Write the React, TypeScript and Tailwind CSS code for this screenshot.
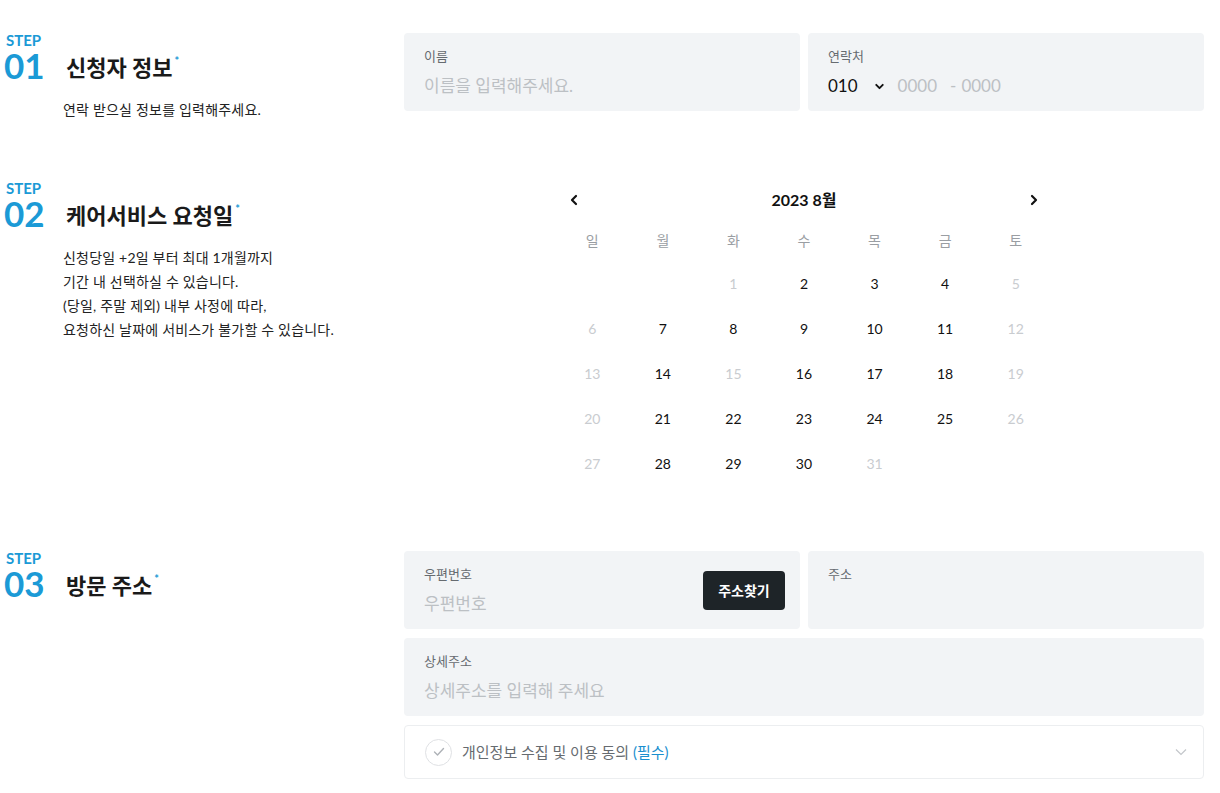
import { ChevronDown } from "lucide-react";

const BLUE = "text-[#1b9ad6]";

type Day = { n: number; off?: boolean } | null;

const weekdays = ["일", "월", "화", "수", "목", "금", "토"];

const disabled = [1, 5, 6, 12, 13, 15, 19, 20, 26, 27, 31];

const days: Day[] = [
  null,
  null,
  ...Array.from({ length: 31 }, (_, i) => ({ n: i + 1, off: disabled.includes(i + 1) })),
];

function StepHead({ num, title }: { num: string; title: string }) {
  return (
    <div className="flex">
      <div className={`w-[66px] pl-[4px] font-bold ${BLUE}`}>
        <div className="h-[15px] pl-[2px] text-[15px] leading-[15px]">STEP</div>
        <div className="h-[35px] text-[35px] leading-[35px]">{num}</div>
      </div>
      <div className="pt-[20px]">
        <h2 className="text-[22px] font-bold leading-[30px] text-[#1a1a1a]">
          {title}
          <span className={`ml-[2px] align-top text-[11px] leading-[16px] ${BLUE}`}>*</span>
        </h2>
      </div>
    </div>
  );
}

function Field({
  label,
  placeholder,
  className = "",
}: {
  label: string;
  placeholder?: string;
  className?: string;
}) {
  return (
    <div className={`h-[78px] rounded-[4px] bg-[#f2f4f6] px-5 pt-[14px] ${className}`}>
      <div className="text-[13px] leading-[18px] text-[#666b70]">{label}</div>
      {placeholder && (
        <div className="mt-[9px] text-[17px] leading-[24px] text-[#bcc0c4]">{placeholder}</div>
      )}
    </div>
  );
}

function Chev({ dir }: { dir: "left" | "right" }) {
  return (
    <svg width="10" height="12" viewBox="0 0 10 12" fill="none">
      <polyline
        points={dir === "left" ? "7,2 3,6 7,10" : "3,2 7,6 3,10"}
        stroke="#111"
        strokeWidth="2.2"
        strokeLinecap="round"
        strokeLinejoin="round"
      />
    </svg>
  );
}

export default function App() {
  return (
    <div className="min-h-[793px] bg-white pt-[33px] font-[Lato,'Noto_Sans_CJK_KR',sans-serif] text-[#222]">
      {/* step 01 */}
      <section className="flex">
        <div className="w-[404px]">
          <StepHead num="01" title="신청자 정보" />
          <p className="mt-[15px] pl-[63px] text-[14px] leading-[24px] tracking-[0.2px] text-[#222]">
            연락 받으실 정보를 입력해주세요.
          </p>
        </div>
        <div className="grid w-[800px] grid-cols-2 gap-2 self-start">
          <Field label="이름" placeholder="이름을 입력해주세요." />
          <div className="h-[78px] rounded-[4px] bg-[#f2f4f6] px-5 pt-[14px]">
            <div className="text-[13px] leading-[18px] text-[#666b70]">연락처</div>
            <div className="mt-[9px] flex items-center text-[17px] leading-[24px]">
              <span className="text-[#111]">010</span>
              <ChevronDown className="ml-[15px] h-[13px] w-[13px] text-[#111]" strokeWidth={3.5} />
              <span className="ml-[12px] text-[#bcc0c4]">0000</span>
              <span className="ml-[13px] text-[#bcc0c4]">-</span>
              <span className="ml-[5px] text-[#bcc0c4]">0000</span>
            </div>
          </div>
        </div>
      </section>

      {/* step 02 */}
      <section className="mt-[59px] flex">
        <div className="w-[404px]">
          <StepHead num="02" title="케어서비스 요청일" />
          <p className="mt-[15px] pl-[63px] text-[14px] leading-[24px] tracking-[0.2px] text-[#222]">
            신청당일 +2일 부터 최대 1개월까지
            <br />
            기간 내 선택하실 수 있습니다.
            <br />
            (당일, 주말 제외) 내부 사정에 따라,
            <br />
            요청하신 날짜에 서비스가 불가할 수 있습니다.
          </p>
        </div>
        <div className="w-[800px]">
          <div className="mx-auto w-[494px]">
            <div className="flex h-[38px] items-center justify-between px-[12px]">
              <Chev dir="left" />
              <span className="text-[16px] font-bold text-[#111]">2023 8월</span>
              <Chev dir="right" />
            </div>
            <div className="grid h-[42px] grid-cols-7 items-center text-center text-[14px] text-[#9a9ea3]">
              {weekdays.map((w) => (
                <span key={w}>{w}</span>
              ))}
            </div>
            <div className="grid grid-cols-7 text-center text-[14px]">
              {days.map((d, i) => (
                <div
                  key={i}
                  className={`flex h-[45px] items-center justify-center ${
                    d?.off ? "text-[#c9ccd0]" : "text-[#111]"
                  }`}
                >
                  {d?.n}
                </div>
              ))}
            </div>
          </div>
        </div>
      </section>

      {/* step 03 */}
      <section className="mt-[65px] flex">
        <div className="w-[404px]">
          <StepHead num="03" title="방문 주소" />
        </div>
        <div className="flex w-[800px] flex-col gap-[9px]">
          <div className="grid grid-cols-2 gap-2">
            <div className="flex h-[78px] items-center justify-between rounded-[4px] bg-[#f2f4f6] pl-5 pr-[15px]">
              <div className="pt-[1px]">
                <div className="text-[13px] leading-[18px] text-[#666b70]">우편번호</div>
                <div className="mt-[9px] text-[17px] leading-[24px] text-[#bcc0c4]">우편번호</div>
              </div>
              <button className="h-[39px] w-[82px] rounded-[4px] bg-[#1e2428] text-[14px] font-bold text-white">
                주소찾기
              </button>
            </div>
            <Field label="주소" />
          </div>
          <Field label="상세주소" placeholder="상세주소를 입력해 주세요" />
          <div className="flex h-[54px] items-center justify-between rounded-[4px] border border-[#eceef0] bg-white pl-[20px] pr-[16px]">
            <div className="flex items-center">
              <span className="flex h-[27px] w-[27px] items-center justify-center rounded-full border border-[#dfe1e4]">
                <svg width="12" height="10" viewBox="0 0 12 10" fill="none">
                  <polyline
                    points="1.5,5 4.5,8 10.5,1.5"
                    stroke="#aeb2b7"
                    strokeWidth="1.4"
                    strokeLinecap="round"
                    strokeLinejoin="round"
                  />
                </svg>
              </span>
              <span className="ml-[10px] text-[15px] text-[#666b70]">
                개인정보 수집 및 이용 동의 <span className="text-[#1b8fcf]">(필수)</span>
              </span>
            </div>
            <svg width="12" height="8" viewBox="0 0 12 8" fill="none">
              <polyline points="1,1.5 6,6.5 11,1.5" stroke="#c3c6ca" strokeWidth="1.2" />
            </svg>
          </div>
        </div>
      </section>
    </div>
  );
}
